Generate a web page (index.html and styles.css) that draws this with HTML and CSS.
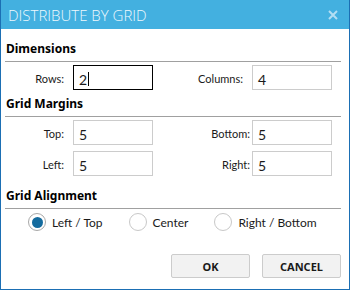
FILE: index.html
```html
<!DOCTYPE html>
<html lang="en">
<head>
    <meta charset="UTF-8">
    <title>Distribute by Grid</title>
    <link rel="stylesheet" href="styles.css">
</head>
<body>

    <div class="dialog">
        <div class="title-bar">
            <span class="title">DISTRIBUTE BY GRID</span>
            <svg class="close" width="10" height="10" viewBox="0 0 10 10">
                <path d="M1 1 L9 9 M9 1 L1 9" stroke="currentColor" stroke-width="2" fill="none"/>
            </svg>
        </div>

        <div class="content">
            <div class="section-title">Dimensions</div>
            <div class="field-grid">
                <label class="field-label">Rows:</label>
                <div class="textbox focused"><span>2</span><span class="caret"></span></div>
                <label class="field-label">Columns:</label>
                <div class="textbox"><span>4</span></div>
            </div>

            <div class="section-title">Grid Margins</div>
            <div class="field-grid">
                <label class="field-label">Top:</label>
                <div class="textbox"><span>5</span></div>
                <label class="field-label tight">Bottom:</label>
                <div class="textbox"><span>5</span></div>

                <label class="field-label">Left:</label>
                <div class="textbox"><span>5</span></div>
                <label class="field-label tight">Right:</label>
                <div class="textbox"><span>5</span></div>
            </div>

            <div class="section-title spaced">Grid Alignment</div>
            <div class="radio-row">
                <label class="radio checked"><span class="radio-circle"></span>Left / Top</label>
                <label class="radio"><span class="radio-circle"></span>Center</label>
                <label class="radio"><span class="radio-circle"></span>Right / Bottom</label>
            </div>

            <div class="buttons">
                <button class="btn">OK</button>
                <button class="btn">CANCEL</button>
            </div>
        </div>
    </div>

</body>
</html>
```

FILE: styles.css
```css
body {
    margin: 0;
    font-family: "Lato", "Noto Sans", sans-serif;
    color: #1a1a1a;
    background-color: #fff;
}
.dialog {
    width: 350px;
    height: 290px;
    box-sizing: border-box;
    border: 1px solid #1b6fb4;
    border-top: none;
    background-color: #fff;
}
.title-bar {
    height: 29px;
    background-color: #43b0e0;
    display: flex;
    align-items: center;
    justify-content: space-between;
    padding: 0 11px 0 7px;
}
.title {
    font-family: "Open Sans", sans-serif;
    font-weight: 300;
    font-size: 15px;
    color: #eef8fd;
    padding-top: 1px;
}
.close {
    color: #b3def3;
    margin-top: 1px;
}
.content {
    padding: 0 8px 0 4px;
}
.section-title {
    font-family: "Noto Sans", sans-serif;
    font-weight: bold;
    font-size: 12px;
    line-height: 16px;
    color: #000;
    padding: 0 0 4px 1px;
    border-bottom: 1px solid #a0a0a0;
    margin-top: 12px;
}
.field-grid {
    display: grid;
    grid-template-columns: 59px 80px 1fr 80px;
    column-gap: 9px;
    row-gap: 6px;
    align-items: center;
    margin: 3px 9px 0 0;
}
.field-grid + .section-title {
    margin-top: 6px;
}
.field-grid + .section-title.spaced {
    margin-top: 12px;
}
.field-label {
    font-size: 11px;
    text-align: right;
    padding-top: 1px;
}
.field-label.tight {
    margin-right: -7px;
}
.textbox {
    height: 25px;
    box-sizing: border-box;
    border: 1px solid #cccccc;
    font-size: 14px;
    padding: 3px 0 0 5px;
    display: flex;
    align-items: center;
}
.textbox.focused {
    border-color: #000;
}
.caret {
    width: 1px;
    height: 14px;
    background-color: #000;
    margin-left: 1px;
}
.radio-row {
    display: flex;
    gap: 26px;
    margin: 4px 0 0 23px;
}
.radio {
    display: flex;
    align-items: center;
    gap: 6px;
    font-size: 12px;
    white-space: nowrap;
}
.radio-circle {
    width: 18px;
    height: 18px;
    box-sizing: border-box;
    border: 1px solid #c8c8c8;
    border-radius: 50%;
    display: flex;
    align-items: center;
    justify-content: center;
}
.radio.checked .radio-circle {
    border-color: #a8a8a8;
}
.radio.checked .radio-circle::after {
    content: "";
    width: 11px;
    height: 11px;
    border-radius: 50%;
    background-color: #146b9e;
}
.buttons {
    display: flex;
    justify-content: flex-end;
    gap: 12px;
    margin-top: 23px;
}
.btn {
    width: 79px;
    height: 24px;
    font-family: "Noto Sans", sans-serif;
    font-weight: bold;
    font-size: 11px;
    color: #1a1a1a;
    background-color: #f2f2f2;
    border: 1px solid #cccccc;
    border-radius: 2px;
    padding: 0;
}
```
